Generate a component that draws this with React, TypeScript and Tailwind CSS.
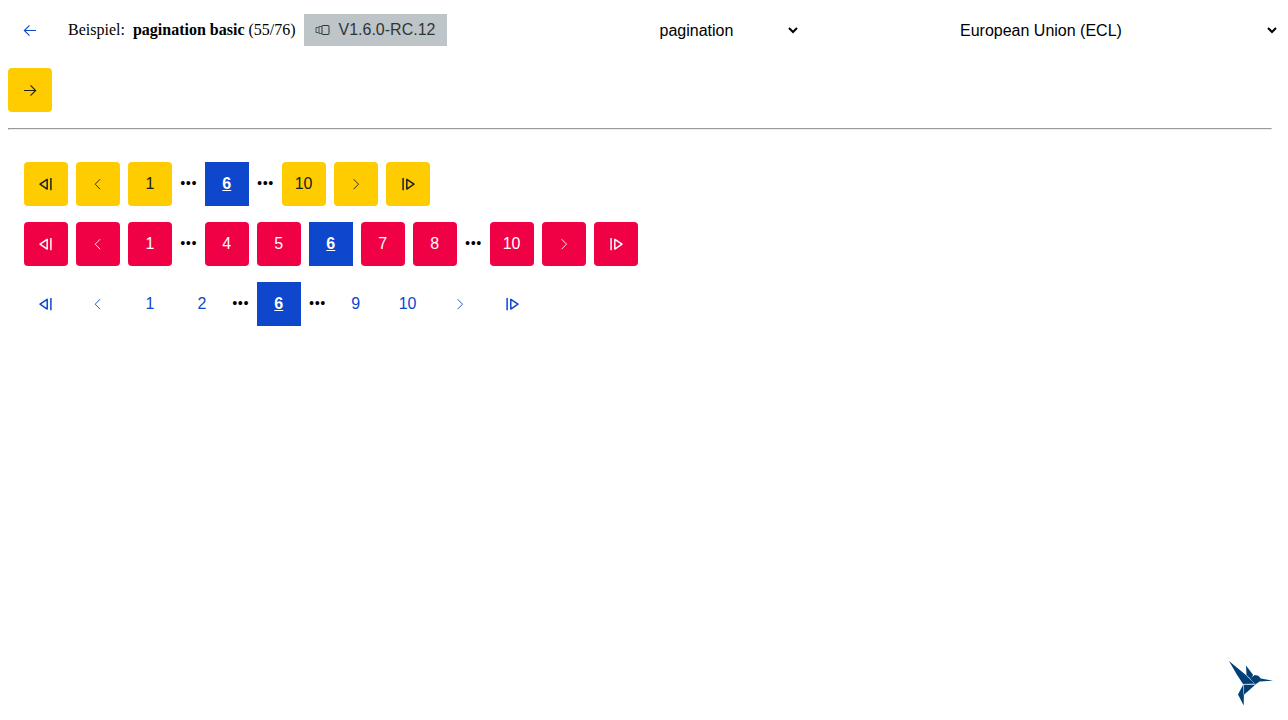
import React from 'react';

type Tone = 'primary' | 'danger' | 'ghost';
type Item = number | 'first' | 'prev' | 'next' | 'last' | 'gap';

const tones: Record<Tone, string> = {
  primary: 'bg-[#ffcc00] text-[#202020]',
  danger: 'bg-[#f00044] text-white',
  ghost: 'bg-transparent text-[#0e47cb]',
};

const rows: { tone: Tone; items: Item[] }[] = [
  { tone: 'primary', items: ['first', 'prev', 1, 'gap', 6, 'gap', 10, 'next', 'last'] },
  { tone: 'danger', items: ['first', 'prev', 1, 'gap', 4, 5, 6, 7, 8, 'gap', 10, 'next', 'last'] },
  { tone: 'ghost', items: ['first', 'prev', 1, 2, 'gap', 6, 'gap', 9, 10, 'next', 'last'] },
];

function Icon({ name }: { name: string }) {
  const props = { width: 16, height: 16, viewBox: '0 0 16 16', fill: 'none', stroke: 'currentColor' };
  switch (name) {
    case 'first':
      return <svg {...props}><path d="M9.2 3.3v9.8L2 8.2z" strokeWidth="1.5" strokeLinejoin="round" /><path d="M12.9 2v12.2" strokeWidth="1.5" /></svg>;
    case 'last':
      return <svg {...props}><path d="M6.8 3.3v9.8L14 8.2z" strokeWidth="1.5" strokeLinejoin="round" /><path d="M3.1 2v12.2" strokeWidth="1.5" /></svg>;
    case 'prev':
      return <svg {...props}><path d="M10.1 3.2 5.2 8.2l4.9 5" strokeWidth="0.9" /></svg>;
    case 'next':
      return <svg {...props}><path d="m5.6 3.2 4.9 5-4.9 5" strokeWidth="0.9" /></svg>;
    case 'left':
      return <svg {...props}><path d="M14 8.5H2.3M7.5 3.3 2.3 8.5l5.2 5.2" strokeWidth="1.1" /></svg>;
    case 'right':
      return <svg {...props}><path d="M2 8.5h11.7M8.5 3.3l5.2 5.2-5.2 5.2" strokeWidth="1.1" /></svg>;
    default:
      return <svg {...props}><rect x="7" y="3.5" width="7" height="9" rx="0.5" /><path d="M7 4.5H4v7h3M3.5 5.5H1v5h2.5" strokeWidth="0.8" /></svg>;
  }
}

function Page({ item, tone }: { item: Item; tone: Tone }) {
  if (item === 'gap') return <span>•••</span>;
  const active = item === 6;
  return (
    <button
      className={`flex size-11 shrink-0 items-center justify-center font-['Liberation_Sans',sans-serif] ${
        active ? 'bg-[#0e47cb] font-bold text-white underline' : `rounded ${tones[tone]}`
      }`}
    >
      {typeof item === 'number' ? item : <Icon name={item} />}
    </button>
  );
}

function Bird() {
  return (
    <svg width="46" height="46" viewBox="0 0 46 46" fill="#004077">
      <path d="M1 1 18.5 15.5 26.5 23.7l-11.5.2L8.5 14z" />
      <path d="m18 5.5 7.2 9.5-2 2.5L26 22l-7.5-7z" />
      <path d="m22.5 17.7 4.5-2.7 3.3.7 2.7 3-1.4 2.9L27 24.8l-4-3.5z" />
      <path d="m32.5 18.5 12.5 2.1-13.2 1z" />
      <path d="M15.5 24.8h11.8L16 34.7z" />
      <path d="m15 25 .9 9.5-.2 11-5.7-11z" />
      <path d="m18.5 15.5 8.5 8.5M15 24.3h12.3M15.6 25v9.5" fill="none" stroke="#a6bed0" strokeWidth="0.6" />
    </svg>
  );
}

export default function App() {
  return (
    <div className="flex h-screen flex-col bg-white font-['Liberation_Serif',serif] text-base text-black">
      <header className="flex h-[60px] items-center pl-2">
        <button className="flex size-11 items-center justify-center text-[#0e47cb]"><Icon name="left" /></button>
        <p className="ml-4 w-[236px] whitespace-nowrap">
          <span className="mr-2">Beispiel:</span><strong>pagination basic</strong> (55/76)
        </p>
        <span className="flex h-8 w-[143px] items-center gap-2 bg-[#bec5c9] pl-[10.5px] font-['Liberation_Sans',sans-serif] text-[#303538]">
          <Icon name="version" /><span>V1.6.0-RC.12</span>
        </span>
        <select className="ml-[208.5px] w-[145.5px] font-['Liberation_Sans',sans-serif]"><option>pagination</option></select>
        <select className="ml-[155px] w-[324px] font-['Liberation_Sans',sans-serif]"><option>European Union (ECL)</option></select>
      </header>
      <main className="px-2 pt-2">
        <button className="flex size-11 items-center justify-center rounded bg-[#ffcc00] text-[#202020]"><Icon name="right" /></button>
        <hr className="mt-4 mr-2 h-0 border border-t-[#9a9a9a] border-r-[#ededed] border-b-[#ededed] border-l-[#9a9a9a]" />
        <div className="mt-8 flex flex-col gap-4 pl-4">
          {rows.map(({ tone, items }) => (
            <nav key={tone} className="flex items-center gap-2">
              {items.map((item, i) => <Page key={i} item={item} tone={tone} />)}
            </nav>
          ))}
        </div>
      </main>
      <footer className="mt-auto flex justify-end pr-[14px] pb-[14px]"><Bird /></footer>
    </div>
  );
}
